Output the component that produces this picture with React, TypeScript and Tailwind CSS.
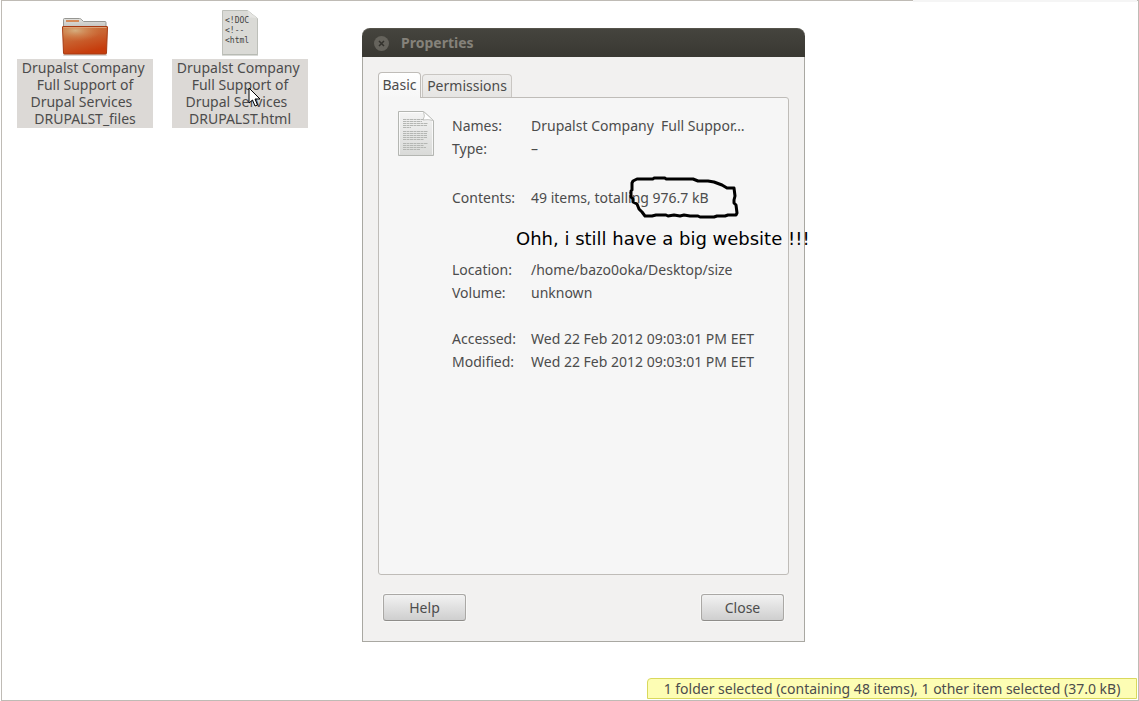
import { useState } from "react";

// the file names keep the trailing spaces they were saved with
const files = [
  {
    id: "folder",
    icon: <FolderIcon />,
    lines: ["Drupalst Company\u00a0", "Full Support of", "Drupal Services\u00a0\u00a0", "DRUPALST_files"],
  },
  {
    id: "html",
    icon: <HtmlIcon />,
    lines: ["Drupalst Company\u00a0", "Full Support of", "Drupal Services\u00a0\u00a0", "DRUPALST.html"],
  },
];

const groups = [
  {
    space: "",
    rows: [
      ["Names:", "Drupalst Company\u00a0 Full Suppor…"],
      ["Type:", "–"],
    ],
  },
  {
    space: "mt-[26px]",
    rows: [["Contents:", "49 items, totalling 976.7 kB"]],
  },
  {
    space: "mt-[49px]",
    rows: [
      ["Location:", "/home/bazo0oka/Desktop/size"],
      ["Volume:", "unknown"],
    ],
  },
  {
    space: "mt-[23px]",
    rows: [
      ["Accessed:", "Wed 22 Feb 2012 09:03:01 PM EET"],
      ["Modified:", "Wed 22 Feb 2012 09:03:01 PM EET"],
    ],
  },
];

function FolderIcon() {
  return (
    <svg width="48" height="40" viewBox="0 0 48 40" aria-hidden="true">
      <defs>
        <linearGradient id="folderFront" x1="0" y1="0" x2="0.4" y2="1">
          <stop offset="0" stopColor="#c9793f" />
          <stop offset="0.5" stopColor="#c96331" />
          <stop offset="1" stopColor="#c63c0c" />
        </linearGradient>
        <radialGradient id="folderShine" cx="0.28" cy="0.2" r="0.6">
          <stop offset="0" stopColor="#d5b183" stopOpacity="0.95" />
          <stop offset="1" stopColor="#d5804a" stopOpacity="0" />
        </radialGradient>
        <linearGradient id="folderBack" x1="0" y1="0" x2="0" y2="1">
          <stop offset="0" stopColor="#e2e2df" />
          <stop offset="1" stopColor="#bcbcb8" />
        </linearGradient>
      </defs>
      <rect x="2" y="37" width="44" height="2" rx="1" fill="#d8d4d0" />
      <path
        d="M2.5 12V2.500q0-1 1-1H18.500q1 0 1.800.8L22.500 4.500h21.500q1 0 1 1V12z"
        fill="url(#folderBack)"
        stroke="#969692"
      />
      <rect x="5" y="3" width="13" height="2" fill="#d58a59" />
      <path
        d="M1.500 10q0-.5.500-.5h44q.5 0 .5.500l-1 26q0 1-1 1H3.500q-1 0-1-1z"
        fill="url(#folderFront)"
        stroke="#a63a12"
      />
      <path d="M2 10h44l-.4 12C30 22 17 28 2.500 28z" fill="url(#folderShine)" />
      <path d="M2.500 10.500h43" stroke="#dba176" />
    </svg>
  );
}

function HtmlIcon() {
  return (
    <svg width="38" height="47" viewBox="0 0 38 47" aria-hidden="true">
      <path d="M1.500 1.500h25l10 8v36h-35z" fill="#dadad6" stroke="#bdbfb9" />
      <path d="M26.500 1.500q2 5-.5 7.500 6-1 10.500.5z" fill="#e5e5e2" />
      <path d="M1 46h36" stroke="#b3b6af" />
      <g
        fill="#444"
        fontFamily="'DejaVu Sans Mono', monospace"
        fontSize="8"
      >
        <text x="4" y="14">&lt;!DOC</text>
        <text x="4" y="24">&lt;!--</text>
        <text x="4" y="34">&lt;html</text>
      </g>
    </svg>
  );
}

function DocumentIcon() {
  return (
    <svg width="38" height="47" viewBox="0 0 38 47" aria-hidden="true">
      <defs>
        <linearGradient id="paper" x1="0" y1="0" x2="0" y2="1">
          <stop offset="0" stopColor="#f4f4f4" />
          <stop offset="1" stopColor="#d9dad8" />
        </linearGradient>
      </defs>
      <path d="M1.500 1.500h25l10 9v35h-35z" fill="url(#paper)" stroke="#b4b6b2" />
      <path d="M2.500 44.500v-42H26M35.500 11v33.500" fill="none" stroke="#fff" strokeOpacity=".7" />
      <path d="M26.500 1.500q2 5-.5 8.500 5-1 10.500.5z" fill="#fff" stroke="#c4c5c2" />
      <path
        d="M6 9.500h21M6 11.500h19M6 13.500h25M6 15.500h24M6 17.500h8M6 21.500h25M6 23.500h24M6 25.500h24M6 27.500h24M6 29.500h21M6 33.500h25M6 35.500h21M6 37.500h23M6 39.500h17"
        stroke="#b4b6b3"
        strokeDasharray="3 .5"
      />
    </svg>
  );
}

// hand-drawn circle and note over the dialog
function Annotation() {
  return (
    <>
      <svg
        className="pointer-events-none absolute left-[264px] top-[147px]"
        width="114"
        height="46"
        viewBox="0 0 114 46"
        fill="none"
        stroke="#000"
        strokeWidth="3"
        strokeLinejoin="round"
        aria-hidden="true"
      >
        <path d="M11 4L7 6 6 8v7l-1 1v6l2 2v3l4 2 2 5 3 3 3 4h7l4-1h10l2 1 6-1 6 1 4-1 6 1h8l2 1h14l3-1h8l3-1h8l1-2-1-8-2-2v-3l1-4-1-8h-7l-5-3-8-3-6-1H72l-5-2H40l-1-1H28l-1 1H16z" />
      </svg>
      <p className="pointer-events-none absolute left-[154px] top-[199px] whitespace-nowrap font-['DejaVu_Sans',sans-serif] text-[18px] leading-6 text-black">
        Ohh, i still have a big website !!!
      </p>
    </>
  );
}

function PropertiesDialog() {
  const [tab, setTab] = useState("basic");

  return (
    <section
      role="dialog"
      aria-label="Properties"
      className="absolute left-[360px] top-[27px] w-[443px]"
    >
      <header className="flex h-[29px] items-center gap-3 rounded-t-lg border-t border-[#55534b] bg-linear-to-b from-[#45443e] to-[#393832] pl-3">
        <button aria-label="Close window" className="size-[15px] rounded-full bg-[#65635c]">
          <svg width="15" height="15" viewBox="0 0 15 15" stroke="#33322d" strokeWidth="1.500">
            <path d="M5 5l5 5M10 5l-5 5" />
          </svg>
        </button>
        <h1 className="pb-0.5 text-[14px] font-bold text-[#85827a]">Properties</h1>
      </header>

      <div className="border border-t-0 border-[#a9a8a2] bg-[#f2f1f0] px-[15px] pb-5 pt-[15px]">
        <div role="tablist" className="flex items-end gap-px">
          <button
            role="tab"
            aria-selected={tab === "basic"}
            onClick={() => setTab("basic")}
            className="relative -mb-px h-[26px] w-[43px] rounded-t border border-b-0 border-[#bfbcb8] bg-linear-to-b from-white to-[#f6f6f6] pb-0.5"
          >
            Basic
          </button>
          <button
            role="tab"
            aria-selected={tab === "permissions"}
            onClick={() => setTab("permissions")}
            className="h-[23px] w-[90px] rounded-t border border-b-0 border-[#c9c6c2] bg-linear-to-b from-[#efeeed] to-[#e6e5e3] pb-0.5"
          >
            Permissions
          </button>
        </div>

        <div
          role="tabpanel"
          className="flex min-h-[478px] items-start gap-[17px] rounded-b-[3px] rounded-tr-[3px] border border-[#bfbcb8] bg-[#f6f6f6] pl-[18px] pt-3"
        >
          <DocumentIcon />
          <div className="pt-1">
            {groups.map((group) => (
              <dl key={group.rows[0][0]} className={group.space}>
                {group.rows.map(([label, value]) => (
                  <div key={label} className="flex h-[23px] items-center">
                    <dt className="w-[79px]">{label}</dt>
                    <dd className="whitespace-nowrap">{value}</dd>
                  </div>
                ))}
              </dl>
            ))}
          </div>
        </div>

        <footer className="mt-[19px] flex justify-between px-[5px]">
          <DialogButton label="Help" />
          <DialogButton label="Close" />
        </footer>
      </div>

      <Annotation />
    </section>
  );
}

function DialogButton({ label }: { label: string }) {
  return (
    <button className="h-[27px] w-[83px] rounded-[3px] border border-[#aaa8a5] border-b-[#8f8d8a] bg-linear-to-b from-[#f2f2f2] to-[#cfcfcf] shadow-[0_0_0_1px_#f8f8f7]">
      {label}
    </button>
  );
}

export default function App() {
  return (
    <div className="bg-white pl-px font-['Noto_Sans',sans-serif] text-[14px] leading-[17px] text-[#4c4c4c]">
      <main className="relative min-h-screen overflow-hidden border border-[#bfbbb5] bg-white">
        {/* FILES */}
        <ul className="flex gap-[19px] pl-[15px] pt-2">
          {files.map((file) => (
            <li key={file.id} className="flex w-[136px] flex-col items-center">
              <div className="flex h-[50px] items-start">
                <div className={file.id === "folder" ? "pt-2" : ""}>{file.icon}</div>
              </div>
              <p className="w-full bg-[#dcd9d6] pb-px text-center">
                {file.lines.map((line) => (
                  <span key={line} className="block whitespace-nowrap">
                    {line}
                  </span>
                ))}
              </p>
            </li>
          ))}
        </ul>

        <PropertiesDialog />

        {/* CURSOR */}
        <svg
          className="pointer-events-none absolute left-[246px] top-[86px]"
          width="13"
          height="21"
          viewBox="0 0 13 21"
          fill="#fff"
          stroke="#000"
          aria-hidden="true"
        >
          <path d="M1 1v15l3.500-3 2.500 6 2.500-1-2.500-6H12z" />
        </svg>

        {/* STATUS */}
        <p
          role="status"
          className="absolute bottom-px right-px min-w-[490px] whitespace-nowrap rounded-tl-sm border border-[#d9d95c] bg-[#fdfdb4] px-[11px] text-center leading-[19px]"
        >
          1 folder selected (containing 48 items), 1 other item selected (37.0 kB)
        </p>
      </main>
      <div className="absolute right-0.5 top-0 h-0.5 w-56 bg-[#f5f5f5]" />
    </div>
  );
}
